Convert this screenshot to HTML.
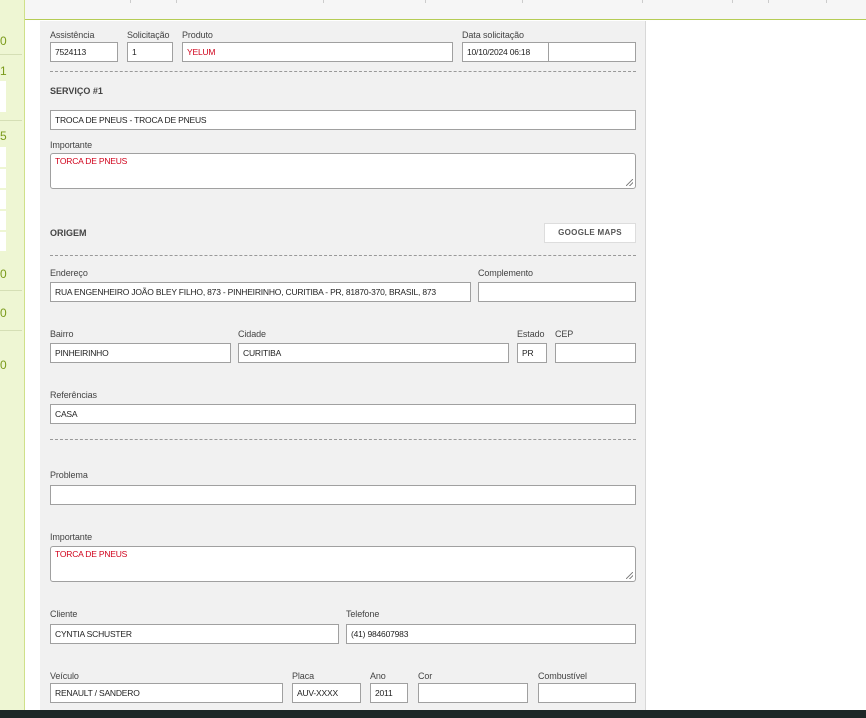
<!DOCTYPE html>
<html><head><meta charset="utf-8"><style>
*{box-sizing:border-box;margin:0;padding:0}
body{width:866px;height:718px;position:relative;overflow:hidden;background:#fff;font-family:"Liberation Sans",sans-serif;color:#333}
div{position:absolute}
.l{font-size:9px;color:#444;white-space:nowrap;letter-spacing:-0.1px;margin-top:1px}
.i{background:#fff;border:1px solid #a0a0a0;height:20px;font-size:8.5px;line-height:18px;padding-left:4px;white-space:nowrap;overflow:hidden;letter-spacing:-0.2px;color:#222}
.t{background:#fff;border:1px solid #a0a0a0;border-radius:3px;font-size:8.5px;padding:2px 4px;color:#d0021b;letter-spacing:-0.2px}
.g{right:2px;bottom:2px;width:7px;height:7px;background:linear-gradient(135deg,transparent 45%,#888 45%,#888 55%,transparent 55%,transparent 70%,#888 70%,#888 80%,transparent 80%)}
.d{border-top:1px dashed #999;height:0;left:50px;width:586px}
.b{font-size:9px;font-weight:bold;color:#444}
.n{color:#7a9a1a;font-size:12px}
.lb{background:#fff;left:0;width:6px}
.sep{left:0;width:22px;border-top:1px solid #d5dfb5;height:0}
.tv{top:0;height:3px;width:1px;background:#ccc}
</style></head><body>
<div style="left:0;top:0;width:866px;height:20px;background:#f6f6f6;border-bottom:1px solid #b5cc55"></div>
<div class="tv" style="left:130px"></div><div class="tv" style="left:176px"></div><div class="tv" style="left:323px"></div><div class="tv" style="left:425px"></div><div class="tv" style="left:522px"></div><div class="tv" style="left:642px"></div><div class="tv" style="left:732px"></div><div class="tv" style="left:768px"></div><div class="tv" style="left:826px"></div>
<div style="left:0;top:0;width:25px;height:718px;background:#eef6d3;border-right:1px solid #cfe08a"></div>
<div class="n" style="left:0;top:34px">0</div>
<div class="sep" style="top:54px"></div>
<div class="n" style="left:0;top:64px">1</div>
<div class="lb" style="top:81px;height:31px"></div>
<div class="sep" style="top:120px"></div>
<div class="n" style="left:0;top:129px">5</div>
<div class="lb" style="top:147px;height:20px"></div>
<div class="lb" style="top:169px;height:19px"></div>
<div class="lb" style="top:190px;height:19px"></div>
<div class="lb" style="top:211px;height:19px"></div>
<div class="lb" style="top:232px;height:19px"></div>
<div class="n" style="left:0;top:267px">0</div>
<div class="sep" style="top:290px"></div>
<div class="n" style="left:0;top:306px">0</div>
<div class="sep" style="top:330px"></div>
<div class="n" style="left:0;top:358px">0</div>
<div style="left:40px;top:21px;width:606px;height:689px;background:#f1f1f1;border-right:1px solid #d8d8d8"></div>

<div class="l" style="left:50px;top:29px">Assistência</div>
<div class="l" style="left:127px;top:29px">Solicitação</div>
<div class="l" style="left:182px;top:29px">Produto</div>
<div class="l" style="left:462px;top:29px">Data solicitação</div>
<div class="i" style="left:50px;top:42px;width:68px">7524113</div>
<div class="i" style="left:127px;top:42px;width:46px">1</div>
<div class="i" style="left:182px;top:42px;width:271px;color:#d0021b">YELUM</div>
<div class="i" style="left:462px;top:42px;width:87px">10/10/2024 06:18</div>
<div class="i" style="left:548px;top:42px;width:88px"></div>
<div class="d" style="top:71px"></div>
<div class="b" style="left:50px;top:86px">SERVIÇO #1</div>
<div class="i" style="left:50px;top:110px;width:586px">TROCA DE PNEUS - TROCA DE PNEUS</div>
<div class="l" style="left:50px;top:139px">Importante</div>
<div class="t" style="left:50px;top:153px;width:586px;height:36px">TORCA DE PNEUS<div class="g"></div></div>
<div class="b" style="left:50px;top:228px">ORIGEM</div>
<div style="left:544px;top:223px;width:92px;height:20px;background:#fff;border:1px solid #ddd;font-size:8px;font-weight:bold;color:#555;text-align:center;line-height:18px;letter-spacing:0.3px">GOOGLE MAPS</div>
<div class="d" style="top:255px"></div>
<div class="l" style="left:50px;top:267px">Endereço</div>
<div class="l" style="left:478px;top:267px">Complemento</div>
<div class="i" style="left:50px;top:282px;width:421px">RUA ENGENHEIRO JOÃO BLEY FILHO, 873 - PINHEIRINHO, CURITIBA - PR, 81870-370, BRASIL, 873</div>
<div class="i" style="left:478px;top:282px;width:158px"></div>
<div class="l" style="left:50px;top:328px">Bairro</div>
<div class="l" style="left:238px;top:328px">Cidade</div>
<div class="l" style="left:517px;top:328px">Estado</div>
<div class="l" style="left:555px;top:328px">CEP</div>
<div class="i" style="left:50px;top:343px;width:181px">PINHEIRINHO</div>
<div class="i" style="left:238px;top:343px;width:271px">CURITIBA</div>
<div class="i" style="left:517px;top:343px;width:30px">PR</div>
<div class="i" style="left:555px;top:343px;width:81px"></div>
<div class="l" style="left:50px;top:389px">Referências</div>
<div class="i" style="left:50px;top:404px;width:586px">CASA</div>
<div class="d" style="top:439px"></div>
<div class="l" style="left:50px;top:469px">Problema</div>
<div class="i" style="left:50px;top:485px;width:586px"></div>
<div class="l" style="left:50px;top:531px">Importante</div>
<div class="t" style="left:50px;top:546px;width:586px;height:36px">TORCA DE PNEUS<div class="g"></div></div>
<div class="l" style="left:50px;top:608px">Cliente</div>
<div class="l" style="left:346px;top:608px">Telefone</div>
<div class="i" style="left:50px;top:624px;width:289px">CYNTIA SCHUSTER</div>
<div class="i" style="left:346px;top:624px;width:290px">(41) 984607983</div>
<div class="l" style="left:50px;top:670px">Veículo</div>
<div class="l" style="left:292px;top:670px">Placa</div>
<div class="l" style="left:370px;top:670px">Ano</div>
<div class="l" style="left:418px;top:670px">Cor</div>
<div class="l" style="left:538px;top:670px">Combustível</div>
<div class="i" style="left:50px;top:683px;width:233px">RENAULT / SANDERO</div>
<div class="i" style="left:292px;top:683px;width:69px">AUV-XXXX</div>
<div class="i" style="left:370px;top:683px;width:38px">2011</div>
<div class="i" style="left:418px;top:683px;width:110px"></div>
<div class="i" style="left:538px;top:683px;width:98px"></div>
<div style="left:0;top:710px;width:866px;height:8px;background:#1d2727"></div>
</body></html>
